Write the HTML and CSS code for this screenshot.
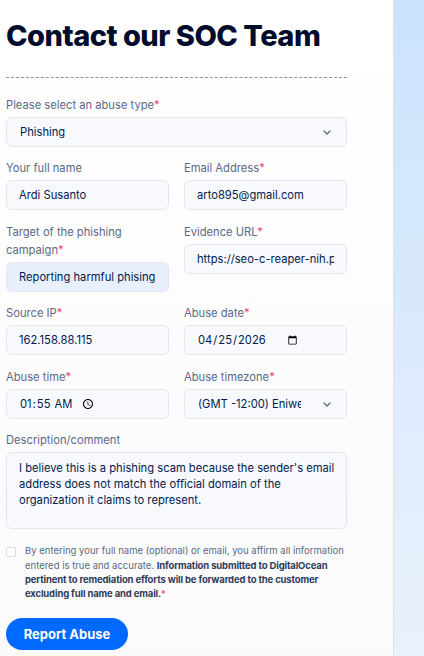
FILE: index.html
```html
<!DOCTYPE html>
<html lang="en">
<head>
<meta charset="utf-8">
<link rel="stylesheet" href="styles.css">
</head>
<body>
<div class="layout">
  <main class="panel">
    <h1 class="title">Contact our SOC Team</h1>
    <hr class="divider">
    <form class="form">
      <div class="field">
        <label class="label">Please select an abuse type<span class="req">*</span></label>
        <div class="select-wrap">
          <select class="control select"><option>Phishing</option></select>
          <svg class="chev" width="8" height="5" viewBox="0 0 8 5"><path d="M1 1l3 3 3-3" fill="none" stroke="#5b6478" stroke-width="1.2" stroke-linecap="round" stroke-linejoin="round"/></svg>
        </div>
      </div>
      <div class="grid">
        <div class="field">
          <label class="label">Your full name</label>
          <input class="control" value="Ardi Susanto">
        </div>
        <div class="field">
          <label class="label">Email Address<span class="req">*</span></label>
          <input class="control" value="arto895@gmail.com">
        </div>
        <div class="field">
          <label class="label">Target of the phishing campaign<span class="req">*</span></label>
          <input class="control autofill" value="Reporting harmful phising">
        </div>
        <div class="field">
          <label class="label">Evidence URL<span class="req">*</span></label>
          <input class="control" value="https://seo-c-reaper-nih.pages.dev">
        </div>
        <div class="field">
          <label class="label">Source IP<span class="req">*</span></label>
          <input class="control" value="162.158.88.115">
        </div>
        <div class="field">
          <label class="label">Abuse date<span class="req">*</span></label>
          <input class="control date" type="date" value="2026-04-25">
        </div>
        <div class="field">
          <label class="label">Abuse time<span class="req">*</span></label>
          <input class="control time" type="time" value="01:55">
        </div>
        <div class="field">
          <label class="label">Abuse timezone<span class="req">*</span></label>
          <div class="select-wrap">
            <select class="control select tz"><option>(GMT -12:00) Eniwetok, Kwajalein</option></select>
            <svg class="chev" width="8" height="5" viewBox="0 0 8 5"><path d="M1 1l3 3 3-3" fill="none" stroke="#5b6478" stroke-width="1.2" stroke-linecap="round" stroke-linejoin="round"/></svg>
          </div>
        </div>
      </div>
      <div class="field desc">
        <label class="label">Description/comment</label>
        <textarea class="control textarea">I believe this is a phishing scam because the sender's email address does not match the official domain of the organization it claims to represent.</textarea>
      </div>
      <label class="consent">
        <input type="checkbox" class="check">
        <span class="consent-text">By entering your full name (optional) or email, you affirm all information entered is true and accurate. <strong>Information submitted to DigitalOcean pertinent to remediation efforts will be forwarded to the customer excluding full name and email.</strong><span class="req">*</span></span>
      </label>
      <button type="button" class="submit">Report Abuse</button>
    </form>
  </main>
  <aside class="side"></aside>
</div>
</body>
</html>
```
FILE: styles.css
```css
* { box-sizing: border-box; }
html, body { margin: 0; height: 100%; }
body {
  font-family: Inter, "Noto Sans", sans-serif;
  color: #031b4e;
  background: #fff;
}
.layout {
  display: flex;
  height: 656px;
  overflow: hidden;
}
.panel {
  width: 394px;
  flex: none;
  padding: 16px 46px 0 6px;
  background: linear-gradient(#ffffff, #fafafa);
  border-right: 1px solid #e2e2e2;
}
.side {
  flex: 1;
  background: linear-gradient(#cbe3fd, #eaf1fc);
}
.title {
  margin: 0;
  font-size: 29px;
  line-height: 40px;
  font-weight: 800;
  letter-spacing: -0.5px;
  color: #000c2b;
}
.divider {
  border: 0;
  border-top: 1px dashed #8c93a3;
  margin: 21px 0 0;
  width: 341px;
}
.form {
  display: flex;
  flex-direction: column;
  width: 341px;
  padding-top: 18px;
}
.grid {
  display: grid;
  grid-template-columns: 163px 163px;
  column-gap: 15px;
  row-gap: 12.7px;
  margin-top: 12px;
  align-items: start;
}
.desc { margin-top: 12.2px; }
.field {
  display: flex;
  flex-direction: column;
  gap: 3px;
}
.label {
  font-size: 11.2px;
  line-height: 18px;
  color: #5b6987;
}
.req { color: #f0426c; }
.control {
  font-family: Inter, "Noto Sans", sans-serif;
  font-size: 11.2px;
  color: #031b4e;
  height: 30px;
  width: 100%;
  border: 1px solid #e3e6ee;
  border-radius: 6px;
  background: #f7f9fd;
  padding: 0 12px;
  outline: none;
}
.autofill { background: #e8f0fe; }
.date::-webkit-datetime-edit,
.time::-webkit-datetime-edit { flex: 0 0 auto; }
.date::-webkit-calendar-picker-indicator { margin-left: 0; }
.time::-webkit-calendar-picker-indicator { margin-left: 5px; }
.select-wrap { position: relative; }
.select {
  appearance: none;
  -webkit-appearance: none;
  padding-right: 30px;
  padding-left: 13px;
}
.tz { padding-right: 45px; }
.chev {
  position: absolute;
  right: 16px;
  top: 13px;
  pointer-events: none;
}
.textarea {
  height: 77px;
  padding: 7px 4px 7px 12px;
  line-height: 16px;
  resize: none;
}
.consent {
  display: flex;
  gap: 9px;
  margin-top: 15px;
}
.check {
  width: 10px;
  height: 10px;
  margin: 3px 0 0;
  flex: none;
  appearance: none;
  -webkit-appearance: none;
  border: 1px solid #d5dae4;
  border-radius: 2px;
  background: #fff;
}
.consent-text {
  font-size: 9.5px;
  line-height: 14.3px;
  color: #5b6987;
}
.consent-text strong { color: #2f3c5a; font-weight: 700; letter-spacing: -0.15px; }
.submit {
  align-self: flex-start;
  margin-top: 17px;
  width: 122px;
  height: 32px;
  border: 0;
  border-radius: 16px;
  background: #0069ff;
  color: #fff;
  font-family: Inter, "Noto Sans", sans-serif;
  font-size: 13px;
  font-weight: 700;
}
```
